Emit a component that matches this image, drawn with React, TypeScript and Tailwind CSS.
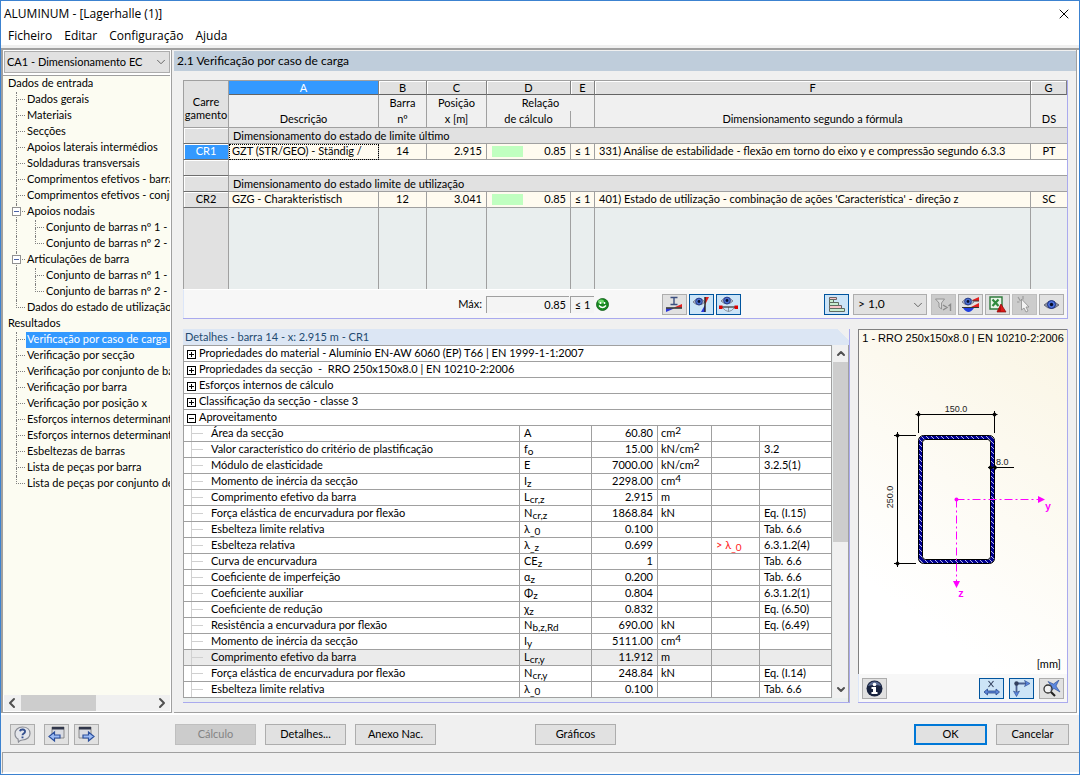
import { useState, type ReactNode } from 'react';
import { ChevronDown, ChevronLeft, ChevronRight, ChevronUp, X } from 'lucide-react';
import clsx from 'clsx';

interface TreeItem {
  label: string;
  level: 0 | 1 | 2;
  last?: boolean;
  expandable?: boolean;
}

const TREE: TreeItem[] = [
  { label: 'Dados de entrada', level: 0 },
  { label: 'Dados gerais', level: 1 },
  { label: 'Materiais', level: 1 },
  { label: 'Secções', level: 1 },
  { label: 'Apoios laterais intermédios', level: 1 },
  { label: 'Soldaduras transversais', level: 1 },
  { label: 'Comprimentos efetivos - barras', level: 1 },
  { label: 'Comprimentos efetivos - conjuntos', level: 1 },
  { label: 'Apoios nodais', level: 1, expandable: true },
  { label: 'Conjunto de barras nº 1 - ', level: 2 },
  { label: 'Conjunto de barras nº 2 - ', level: 2, last: true },
  { label: 'Articulações de barra', level: 1, expandable: true },
  { label: 'Conjunto de barras nº 1 - ', level: 2 },
  { label: 'Conjunto de barras nº 2 - ', level: 2, last: true },
  { label: 'Dados do estado de utilização', level: 1, last: true },
  { label: 'Resultados', level: 0 },
  { label: 'Verificação por caso de carga', level: 1 },
  { label: 'Verificação por secção', level: 1 },
  { label: 'Verificação por conjunto de barras', level: 1 },
  { label: 'Verificação por barra', level: 1 },
  { label: 'Verificação por posição x', level: 1 },
  { label: 'Esforços internos determinantes', level: 1 },
  { label: 'Esforços internos determinantes', level: 1 },
  { label: 'Esbeltezas de barras', level: 1 },
  { label: 'Lista de peças por barra', level: 1 },
  { label: 'Lista de peças por conjunto de barras', level: 1, last: true },
];

const GROUPS = [
  'Propriedades do material - Alumínio EN-AW 6060 (EP) T66 | EN 1999-1-1:2007',
  'Propriedades da secção  -  RRO 250x150x8.0 | EN 10210-2:2006',
  'Esforços internos de cálculo',
  'Classificação da secção - classe 3',
];

interface Detail {
  name: string;
  sym: string;
  sub?: string;
  value: string;
  unit?: string;
  exp?: string;
  check?: boolean;
  ref?: string;
  shaded?: boolean;
}

const DETAILS: Detail[] = [
  { name: 'Área da secção', sym: 'A', value: '60.80', unit: 'cm', exp: '2' },
  { name: 'Valor característico do critério de plastificação', sym: 'f', sub: 'o', value: '15.00', unit: 'kN/cm', exp: '2', ref: '3.2' },
  { name: 'Módulo de elasticidade', sym: 'E', value: '7000.00', unit: 'kN/cm', exp: '2', ref: '3.2.5(1)' },
  { name: 'Momento de inércia da secção', sym: 'I', sub: 'z', value: '2298.00', unit: 'cm', exp: '4' },
  { name: 'Comprimento efetivo da barra', sym: 'L', sub: 'cr,z', value: '2.915', unit: 'm' },
  { name: 'Força elástica de encurvadura por flexão', sym: 'N', sub: 'cr,z', value: '1868.84', unit: 'kN', ref: 'Eq. (I.15)' },
  { name: 'Esbelteza limite relativa', sym: 'λ', sub: '_0', value: '0.100', ref: 'Tab. 6.6' },
  { name: 'Esbelteza relativa', sym: 'λ', sub: '_z', value: '0.699', check: true, ref: '6.3.1.2(4)' },
  { name: 'Curva de encurvadura', sym: 'CE', sub: 'z', value: '1', ref: 'Tab. 6.6' },
  { name: 'Coeficiente de imperfeição', sym: 'α', sub: 'z', value: '0.200', ref: 'Tab. 6.6' },
  { name: 'Coeficiente auxiliar', sym: 'Φ', sub: 'z', value: '0.804', ref: '6.3.1.2(1)' },
  { name: 'Coeficiente de redução', sym: 'χ', sub: 'z', value: '0.832', ref: 'Eq. (6.50)' },
  { name: 'Resistência a encurvadura por flexão', sym: 'N', sub: 'b,z,Rd', value: '690.00', unit: 'kN', ref: 'Eq. (6.49)' },
  { name: 'Momento de inércia da secção', sym: 'I', sub: 'y', value: '5111.00', unit: 'cm', exp: '4' },
  { name: 'Comprimento efetivo da barra', sym: 'L', sub: 'cr,y', value: '11.912', unit: 'm', shaded: true },
  { name: 'Força elástica de encurvadura por flexão', sym: 'N', sub: 'cr,y', value: '248.84', unit: 'kN', ref: 'Eq. (I.14)' },
  { name: 'Esbelteza limite relativa', sym: 'λ', sub: '_0', value: '0.100', ref: 'Tab. 6.6' },
];

const RESULTS = [
  {
    group: 'Dimensionamento do estado de limite último',
    id: 'CR1',
    description: 'GZT (STR/GEO) - Ständig /',
    member: '14',
    x: '2.915',
    ratio: '0.85',
    formula: '331) Análise de estabilidade - flexão em torno do eixo y e compressão segundo 6.3.3',
    ds: 'PT',
  },
  {
    group: 'Dimensionamento do estado limite de utilização',
    id: 'CR2',
    description: 'GZG - Charakteristisch',
    member: '12',
    x: '3.041',
    ratio: '0.85',
    formula: "401) Estado de utilização - combinação de ações 'Característica' - direção z",
    ds: 'SC',
  },
];

/* ---------- icons ---------- */

const Eye = ({ x = 0, y = 0 }: { x?: number; y?: number }) => (
  <g transform={`translate(${x} ${y})`}>
    <path d="M0 5 Q6 -2 12 5 Q6 11 0 5Z" fill="#b9bfd0" stroke="#6b6f82" strokeWidth="0.8" />
    <circle cx="6" cy="4.5" r="3.4" fill="#4a6fd0" stroke="#1d2e78" strokeWidth="0.8" />
    <circle cx="6" cy="4.5" r="1.4" fill="#0a1030" />
  </g>
);

const Icon = ({ children }: { children: ReactNode }) => (
  <svg width="19" height="17" viewBox="0 0 19 17" aria-hidden="true">
    {children}
  </svg>
);

const SectionIcon = () => (
  <Icon>
    <path d="M5.500 1.500H12.500M5.500 8.500H12.500M9 1.500V8.500" stroke="#3c4f80" strokeWidth="1.4" fill="none" />
    <path d="M1 16V12.500H9Z" fill="#2b35d8" />
    <path d="M9 11.500L17 8V11.500Z" fill="#e02020" />
    <path d="M1 12H17" stroke="#222" strokeWidth="1.4" />
  </Icon>
);

const EyeDiagramIcon = () => (
  <Icon>
    <Eye x={1} y={1} />
    <path d="M13 1H17L13 9Z" fill="#e02020" />
    <path d="M13 9V16H9Z" fill="#2b35d8" />
    <path d="M13 1V16" stroke="#222" strokeWidth="1.4" />
  </Icon>
);

const EyeBeamIcon = () => (
  <Icon>
    <Eye x={2} y={0} />
    <path d="M3 11Q9.500 20 16 11M9.500 11V16" stroke="#8b93a0" fill="none" />
    <path d="M2 11H17" stroke="#333" strokeWidth="1.2" />
    <path d="M0 9.500H3.500V13H0ZM15.500 9.500H19V13H15.500Z" fill="#e00000" />
  </Icon>
);

const BarsIcon = () => (
  <Icon>
    <path d="M2.500 1.500H9.500V3.500H2.500ZM2.500 9.500H14.500V12.500H2.500Z" fill="#f8c4c8" stroke="#6e6464" />
    <path d="M2.500 3.500H6.500V6.500H2.500ZM2.500 6.500H11.500V9.500H2.500ZM2.500 12.500H17.500V15.500H2.500Z" fill="#c8ecd0" stroke="#5f6b60" />
  </Icon>
);

const FilterIcon = () => (
  <Icon>
    <path d="M1.500 3H10.500L7.500 7V13L5 11V7Z" fill="#dcdcdc" stroke="#8c8c8c" strokeWidth="0.9" />
    <path d="M9 9L13 11.500L9 14M16.500 15V8.500L14.500 10" stroke="#8a8a8a" strokeWidth="1.4" fill="none" />
  </Icon>
);

const EyeResultsIcon = () => (
  <Icon>
    <path d="M9 5L18 1V5ZM10 11L18 7V11Z" fill="#e02020" />
    <path d="M11 5H18M1 11.500H18" stroke="#333" strokeWidth="1.2" />
    <Eye x={1} y={1} />
    <path d="M2 12H13Q7.500 20 2 12Z" fill="#2040e0" />
  </Icon>
);

const ExcelIcon = () => (
  <Icon>
    <path d="M2 1H14V13H2Z" fill="#e8f4e8" stroke="#2f7a3c" strokeWidth="1.4" />
    <path d="M4.500 3.500L10.500 10M10.500 3.500L4.500 10" stroke="#2f8a3c" strokeWidth="2.2" />
    <path d="M13 8L18 16H9Z" fill="#e01818" stroke="#7c0b0b" strokeWidth="0.7" />
    <path d="M13 8V16H9Z" fill="#b01010" />
  </Icon>
);

const PickIcon = () => (
  <Icon>
    <path d="M3 1L5.500 5M8 0V3.500M2 6H4.500" stroke="#9a9a9a" strokeWidth="1.2" />
    <path d="M6.500 3L14 11H11L13 15L11 16L9 12L6.500 14Z" fill="#f2f2f2" stroke="#8c8c8c" strokeWidth="0.8" />
  </Icon>
);

const EyeIcon = () => (
  <Icon>
    <path d="M2 9Q9 2 17 9Q9 16 2 9Z" fill="#8b90a0" stroke="#55586a" strokeWidth="0.8" />
    <circle cx="9.500" cy="8.500" r="4" fill="#4a70dc" stroke="#1d2e78" />
    <circle cx="9.500" cy="8.500" r="1.700" fill="#080d28" />
  </Icon>
);

const InfoIcon = () => (
  <Icon>
    <circle cx="9.500" cy="8.500" r="8" fill="#18233f" />
    <path d="M3 6Q5 1.500 10 1.500Q15 2 16 6Q10 4 3 6Z" fill="#5a6b92" />
    <circle cx="9.500" cy="4.500" r="1.800" fill="#fff" />
    <path d="M6.500 7H11V12H12.500V14H6.500V12H8V9H6.500Z" fill="#fff" />
  </Icon>
);

const DimensionIcon = () => (
  <Icon>
    <path d="M6.500 1L11.500 7M11.500 1L6.500 7" stroke="#33405e" strokeWidth="1.1" />
    <path d="M2 12L5.500 9V11H14V9L17.500 12L14 15V13H5.500V15Z" fill="#5d85d8" stroke="#27468c" strokeWidth="0.8" />
  </Icon>
);

const AxesIcon = () => (
  <Icon>
    <path d="M4.500 3.500H14M4.500 3.500V12" stroke="#4a5f90" strokeWidth="1.800" />
    <path d="M12.500 0.500L18 3.500L12.500 6.500L14 3.500ZM1.500 11L4.500 12.500L7.500 11L4.500 16.500Z" fill="#5d88e0" stroke="#27468c" strokeWidth="0.6" />
    <circle cx="4.500" cy="3.500" r="2.200" fill="#33405e" />
  </Icon>
);

const ZoomResetIcon = () => (
  <Icon>
    <path d="M6 1.500L11.500 4L17 0L14 6L18 12L12 8.500L8 11L9.500 6Z" fill="#5d88e0" stroke="#27468c" strokeWidth="0.6" />
    <circle cx="6" cy="9" r="4" fill="#ffffff99" stroke="#333" strokeWidth="1.300" />
    <path d="M9 12L13 16" stroke="#222" strokeWidth="2.200" />
  </Icon>
);

const HelpIcon = () => (
  <Icon>
    <path d="M9.500 1C14.500 1 17 4 17 7.500C17 11 14 14 9.500 14C8 14 7 14 5.500 16L5 13C3 12 2 10 2 7.500C2 4 5 1 9.500 1Z" fill="#e4e6ec" stroke="#8a8d96" strokeWidth="1.200" />
    <path d="M7 5.200C7.500 2.700 12.500 3 12 5.800C11.700 7.500 9.500 7.500 9.500 9.300M9.500 10.500V12.300" stroke="#34508f" strokeWidth="1.900" fill="none" />
  </Icon>
);

const ArrowPageIcon = ({ forward = false }: { forward?: boolean }) => (
  <Icon>
    <path d={forward ? 'M2 1H14V12H2Z' : 'M5 1H17V12H5Z'} fill="#d9dbe2" stroke="#777" strokeWidth="0.8" />
    <path d={forward ? 'M2 1H14V3.500H2Z' : 'M5 1H17V3.500H5Z'} fill="#30364a" />
    <path
      d={forward ? 'M6 9H11.500V6L17 10.500L11.500 15V12H6Z' : 'M13 9H7.500V6L2 10.500L7.500 15V12H13Z'}
      fill="#9dbcf5"
      stroke="#2c4f9c"
      strokeWidth="1.200"
    />
  </Icon>
);

const Smiley = () => (
  <svg className="ml-[2px] h-[13px] w-[13px]" viewBox="0 0 13 13" aria-hidden="true">
    <circle cx="6.500" cy="6.500" r="6" fill="#188a20" stroke="#0d5a14" strokeWidth="0.8" />
    <ellipse cx="5" cy="3.500" rx="3" ry="2" fill="#6ed86c" />
    <path d="M4.500 4V6M8.500 4V6" stroke="#fff" strokeWidth="1.500" />
    <path d="M3 7.500Q6.500 11.500 10 7.500" stroke="#fff" strokeWidth="1.300" fill="none" />
  </svg>
);

/* ---------- small controls ---------- */

interface IconButtonProps {
  label: string;
  active?: boolean;
  disabled?: boolean;
  children: ReactNode;
}

const IconButton = ({ label, active, disabled, children }: IconButtonProps) => (
  <button
    aria-label={label}
    disabled={disabled}
    className={clsx(
      'flex h-[21px] w-[25px] shrink-0 items-center justify-center border',
      active && 'border-[#00549e] bg-[#cce4f7]',
      disabled && 'border-[#bfbfbf] bg-[#cccccc]',
      !active && !disabled && 'border-[#adadad] bg-[#e1e1e1]',
    )}
  >
    {children}
  </button>
);

const TextButton = ({ className, disabled, children }: { className: string; disabled?: boolean; children: ReactNode }) => (
  <button
    disabled={disabled}
    className={clsx(
      'flex h-[21px] shrink-0 items-center justify-center pt-px',
      disabled ? 'border border-[#bfbfbf] bg-[#cccccc] text-[#838383]' : 'bg-[#e1e1e1]',
      className,
    )}
  >
    {children}
  </button>
);

const TreeRow = ({ item, selected, onSelect }: { item: TreeItem; selected: boolean; onSelect: () => void }) => (
  <li className="flex h-4 items-stretch">
    {item.level === 0 && <span className="w-[3px] shrink-0" />}
    {item.level > 0 && <span className="w-3 shrink-0" />}
    {item.level === 2 && <span className="w-[19px] shrink-0 border-l border-dotted border-[#808080]" />}
    {item.level > 0 && (
      <span className="relative flex w-[10px] shrink-0 flex-col">
        <span className="mr-px h-2 border-b border-l border-dotted border-[#808080]" />
        {!item.last && <span className="h-2 border-l border-dotted border-[#808080]" />}
        {item.expandable && (
          <span className="absolute top-[3px] -left-1 flex h-[9px] w-[9px] items-center justify-center border border-[#919191] bg-white">
            <span className="h-px w-[5px] bg-[#4b63a7]" />
          </span>
        )}
      </span>
    )}
    <button
      onClick={onSelect}
      className={clsx('pb-[2px] pl-px text-left leading-[14px] whitespace-pre', selected && 'flex-1 bg-[#3399ff] text-white')}
    >
      {item.label}
    </button>
  </li>
);

const Sidebar = () => {
  const [selected, setSelected] = useState(16);

  return (
    <aside className="flex w-[171px] shrink-0 flex-col border-r border-b border-l-2 border-[#a0a0a0] bg-white">
      <div className="relative mt-px mr-px ml-px">
        <select
          aria-label="Caso de dimensionamento"
          className="block h-[22px] w-full appearance-none border border-[#adadad] bg-[#e1e1e1] pl-[2px] outline-none"
        >
          <option>CA1 - Dimensionamento EC</option>
        </select>
        <ChevronDown className="pointer-events-none absolute top-1 right-[2px] h-3.5 w-3.5 text-[#555]" strokeWidth={1.5} />
      </div>
      <ul className="mt-[2px] mr-px flex-1 overflow-hidden border-t border-[#a0a0a0] bg-[#fcfcf2] pl-px">
        {TREE.map((item, i) => (
          <TreeRow key={i} item={item} selected={i === selected} onSelect={() => setSelected(i)} />
        ))}
      </ul>
      <div className="mr-px mb-px ml-px flex h-4 items-center bg-[#f0f0f0]">
        <ChevronLeft className="mr-px h-4 w-4" strokeWidth={3} color="#505050" />
        <span className="h-full w-[75px] bg-[#cdcdcd]" />
        <ChevronRight className="ml-auto h-4 w-4" strokeWidth={3} color="#505050" />
      </div>
    </aside>
  );
};

const CELL = 'border-r border-b border-[#a0a0a0] bg-[#fffbf0] p-0 whitespace-nowrap overflow-hidden align-top';
const HEAD = 'border-r border-b border-[#a0a0a0] bg-[#f0f0f0] p-0 font-normal align-top';
const ROW_HEAD = 'h-4 border-x border-b border-[#a0a0a0] border-b-[#6e6e6e] p-0 font-normal align-top shadow-[inset_1px_1px_0_#fff]';
const LETTER = 'h-[14px] border-r border-b border-[#808080] border-b-[#646464] p-0 font-normal align-top';

const ResultTable = () => (
  <table className="w-full table-fixed border-separate border-spacing-0 border-t border-[#a0a0a0] text-[11px]/[13px]">
    <colgroup>
      <col className="w-[46px]" />
      <col className="w-[150px]" />
      <col className="w-[48px]" />
      <col className="w-[60px]" />
      <col className="w-[84px]" />
      <col className="w-[24px]" />
      <col />
      <col className="w-[36px]" />
    </colgroup>
    <thead>
      <tr>
        <th rowSpan={3} className="border-x border-b border-[#a0a0a0] bg-[#e1e1e1] p-0 pb-[6px] align-bottom font-normal">
          Carre
          <br />
          gamento
        </th>
        {['A', 'B', 'C', 'D', 'E', 'F', 'G'].map((c) => (
          <th
            key={c}
            className={clsx(LETTER, c === 'A' ? 'bg-[#3399ff] text-white' : 'bg-[#e1e1e1] shadow-[inset_1px_1px_0_#fff]')}
          >
            {c}
          </th>
        ))}
      </tr>
      <tr className="leading-[15px]">
        <th rowSpan={2} className={clsx(HEAD, 'pt-4')}>Descrição</th>
        <th rowSpan={2} className={clsx(HEAD, 'leading-4')}>Barra<br />nº</th>
        <th rowSpan={2} className={clsx(HEAD, 'leading-4')}>Posição<br />x [m]</th>
        <th colSpan={2} className="h-4 border-r border-[#a0a0a0] bg-[#f0f0f0] p-0 align-top font-normal">Relação</th>
        <th rowSpan={2} className={clsx(HEAD, 'pt-4')}>Dimensionamento segundo a fórmula</th>
        <th rowSpan={2} className={clsx(HEAD, 'border-r-0 pt-4')}>DS</th>
      </tr>
      <tr className="leading-[15px]">
        <th className={clsx(HEAD, 'h-[17px]')}>de cálculo</th>
        <th className={HEAD} />
      </tr>
    </thead>
    {RESULTS.map((r, i) => (
      <tbody key={r.id}>
        <tr>
          <th className={clsx(ROW_HEAD, 'bg-[#e1e1e1]')} />
          <td colSpan={7} className="border-b border-[#a0a0a0] bg-[#e1e1e1] p-0 pl-1">{r.group}</td>
        </tr>
        <tr>
          <th className={clsx(ROW_HEAD, i === 0 ? 'bg-[#3399ff] text-white' : 'bg-[#e1e1e1]')}>{r.id}</th>
          <td className={clsx(CELL, 'pl-[3px]', i === 0 && 'outline-1 -outline-offset-1 outline-dotted outline-black')}>{r.description}</td>
          <td className={clsx(CELL, 'text-center')}>{r.member}</td>
          <td className={clsx(CELL, 'pr-1 text-right')}>{r.x}</td>
          <td className={CELL}>
            <div className="flex items-start justify-between pr-1 pl-[5px]">
              <span className="mt-[2px] h-[11px] w-[31px] bg-[#c0ffc0]" />
              {r.ratio}
            </div>
          </td>
          <td className={clsx(CELL, 'text-center')}>≤ 1</td>
          <td className={clsx(CELL, 'pl-1')}>{r.formula}</td>
          <td className={clsx(CELL, 'border-r-0 text-center')}>{r.ds}</td>
        </tr>
        {i === 0 && (
          <tr>
            <th className={clsx(ROW_HEAD, 'bg-[#e1e1e1]')} />
            <td colSpan={7} className="border-b border-[#a0a0a0] bg-white p-0" />
          </tr>
        )}
      </tbody>
    ))}
    <tbody>
      <tr>
        <td className="h-[81px] border-x border-[#a0a0a0] bg-[#e1e1e1]" />
        {[0, 1, 2, 3, 4, 5].map((c) => (
          <td key={c} className="border-r border-[#a0a0a0] bg-[#e9eeee]" />
        ))}
        <td className="bg-[#e9eeee]" />
      </tr>
    </tbody>
  </table>
);

const ResultFooter = () => (
  <div className="flex h-[29px] items-center border-t border-l border-t-white border-l-[#dce6f8] bg-[#f7f7f7] pr-[3px]">
    <label htmlFor="max" className="w-[298px] text-right">Máx:</label>
    <input
      id="max"
      readOnly
      value="0.85"
      className="ml-[4px] h-[17px] w-[83px] border-t border-l border-[#a0a0a0] bg-[#f4f4f4] pr-[3px] text-right outline-none"
    />
    <span className="ml-px h-[17px] w-[24px] border-t border-l border-[#a0a0a0] bg-[#f4f4f4] text-center leading-4">≤ 1</span>
    <Smiley />
    <div className="ml-[53px] flex gap-[2px]">
      <IconButton label="Secção"><SectionIcon /></IconButton>
      <IconButton label="Diagrama" active><EyeDiagramIcon /></IconButton>
      <IconButton label="Barra" active><EyeBeamIcon /></IconButton>
    </div>
    <div className="ml-auto flex items-center gap-[2px]">
      <IconButton label="Barras de relação" active><BarsIcon /></IconButton>
      <div className="relative mx-[2px]">
        <select aria-label="Filtro" className="block h-[21px] w-[74px] appearance-none border border-[#adadad] bg-[#e1e1e1] pl-1 text-xs outline-none">
          <option>&gt; 1,0</option>
        </select>
        <ChevronDown className="pointer-events-none absolute top-1 right-[2px] h-3.5 w-3.5 text-[#555]" strokeWidth={1.5} />
      </div>
      <IconButton label="Filtrar" disabled><FilterIcon /></IconButton>
      <IconButton label="Resultados"><EyeResultsIcon /></IconButton>
      <IconButton label="Exportar"><ExcelIcon /></IconButton>
      <IconButton label="Selecionar" disabled><PickIcon /></IconButton>
      <IconButton label="Ver"><EyeIcon /></IconButton>
    </div>
  </div>
);

const D_CELL = 'h-4 border-r border-b border-[#a0a0a0] p-0 whitespace-pre align-top';

const Toggle = ({ open }: { open?: boolean }) => (
  <span className="relative mr-[3px] ml-[3px] inline-block h-[9px] w-[9px] border border-black align-[-2px]">
    <span className="absolute top-[3px] left-px h-px w-[5px] bg-black" />
    {!open && <span className="absolute top-px left-[3px] h-[5px] w-px bg-black" />}
  </span>
);

const Sub = ({ children }: { children: ReactNode }) => (
  <sub className="-bottom-[2px] text-[10px]">{children}</sub>
);

const DetailsPanel = () => (
  <section className="flex min-w-0 flex-1 flex-col border-r border-b border-[#aaaaee]">
    <h2 className="h-4 bg-[linear-gradient(225deg,#f0f0f0_8px,#dce6f4_8px)] pl-[2px] leading-4 text-[#1f4a70]">
      Detalhes - barra 14 - x: 2.915 m - CR1
    </h2>
    <div className="flex flex-1 border-r border-[#a0a0a0] bg-[#e9eeee] pb-1">
      <table className="flex-1 table-fixed border-separate border-spacing-0 border-t border-l border-[#a0a0a0] bg-white leading-[13px]">
        <colgroup>
          <col />
          <col className="w-[72px]" />
          <col className="w-[66px]" />
          <col className="w-[54px]" />
          <col className="w-[48px]" />
          <col className="w-[72px]" />
        </colgroup>
        <tbody>
          {GROUPS.map((g) => (
            <tr key={g}>
              <td colSpan={6} className={D_CELL}><Toggle />{g}</td>
            </tr>
          ))}
          <tr>
            <td colSpan={6} className={D_CELL}><Toggle open />Aproveitamento</td>
          </tr>
          {DETAILS.map((d, i) => (
            <tr key={i} className={clsx(d.shaded && 'bg-[#ebebeb]')}>
              <td className={D_CELL}>
                <div className="flex items-start">
                  <span className="ml-[7px] h-[15px] w-px bg-[#d0d0d0]" />
                  <span className="mt-[7px] mr-2 h-px w-[11px] bg-[#d0d0d0]" />
                  {d.name}
                </div>
              </td>
              <td className={clsx(D_CELL, 'pl-1')}>
                {d.sym}
                {d.sub && <Sub>{d.sub}</Sub>}
              </td>
              <td className={clsx(D_CELL, 'pr-1 text-right')}>{d.value}</td>
              <td className={clsx(D_CELL, 'pl-[3px]')}>
                {d.unit}
                {d.exp && <sup className="-top-[3px] text-[10px]">{d.exp}</sup>}
              </td>
              <td className={clsx(D_CELL, 'pl-1 text-[#ff2020]')}>
                {d.check && <>&gt; λ<Sub>_0</Sub></>}
              </td>
              <td className={clsx(D_CELL, 'pl-1')}>{d.ref}</td>
            </tr>
          ))}
        </tbody>
      </table>
      <div className="ml-px flex w-[15px] flex-col items-center bg-[#f0f0f0]">
        <ChevronUp className="h-[17px] w-3" strokeWidth={4} color="#505050" />
        <span className="h-[180px] w-full bg-[#cdcdcd]" />
        <ChevronDown className="mt-auto h-[17px] w-3" strokeWidth={4} color="#505050" />
      </div>
    </div>
  </section>
);

const SectionDrawing = () => (
  <svg className="block h-[308px] w-full" viewBox="859 347 208 308" role="img" aria-label="RRO 250x150x8.0">
    <defs>
      <pattern id="hatch" width="5" height="5" patternUnits="userSpaceOnUse">
        <rect width="5" height="5" fill="#000090" />
        <path d="M0 0L5 5M-1 4L1 6M4 -1L6 1" stroke="#c8c8f0" strokeWidth="0.9" />
      </pattern>
    </defs>
    <rect x="920.500" y="437.500" width="72" height="124" rx="4" fill="none" stroke="url(#hatch)" strokeWidth="4" />
    <rect x="918.500" y="435.500" width="76" height="128" rx="5" fill="none" stroke="#000" />
    <rect x="922.500" y="439.500" width="68" height="120" rx="3" fill="none" stroke="#000" />
    <g stroke="#000" fill="none">
      <path d="M915.500 414.500H997.500M918.500 411V433M994.500 411V433M897.500 432V567M894 435.500H916M894 563.500H916M988 467.500H1014" />
    </g>
    <path d="M918.500 412L921 414.500L918.500 417L916 414.500ZM994.500 412L997 414.500L994.500 417L992 414.500ZM897.500 433L900 435.500L897.500 438L895 435.500ZM897.500 561L900 563.500L897.500 566L895 563.500ZM990.500 465L993 467.500L990.500 470L988 467.500ZM995 465L997.500 467.500L995 470L992.500 467.500Z" />
    <g stroke="#ff00ff" fill="none" strokeDasharray="8 3 2 3">
      <path d="M956.500 499.500H1038M956.500 499.500V582" />
    </g>
    <path d="M1038 496L1045 499.500L1038 503ZM953 581H960L956.500 588Z" fill="#ff00ff" />
    <circle cx="956.500" cy="499.500" r="2" fill="#ff00ff" />
    <g fontFamily="Liberation Sans, sans-serif" fontSize="9" fill="#222">
      <text x="956" y="412" textAnchor="middle">150.0</text>
      <text x="996" y="465">8.0</text>
      <text transform="translate(893 497) rotate(-90)" textAnchor="middle">250.0</text>
    </g>
    <g fontFamily="Liberation Mono, monospace" fontSize="10" fontWeight="bold" fill="#ff00ff">
      <text x="1045" y="510">y</text>
      <text x="958" y="597">z</text>
    </g>
  </svg>
);

const PreviewPanel = () => (
  <section className="flex w-[210px] shrink-0 flex-col border-r border-b border-[#aaaaee]">
    <div className="flex flex-1 flex-col border-t border-l border-[#808080] bg-[linear-gradient(35deg,#ffffff_20%,#faf5e4)]">
      <h2 className="h-[17px] text-center font-['Liberation_Sans',sans-serif] leading-[17px] whitespace-nowrap">
        1 - RRO 250x150x8.0 | EN 10210-2:2006
      </h2>
      <SectionDrawing />
      <p className="mt-auto pr-[6px] pb-[2px] text-right leading-4">[mm]</p>
    </div>
    <div className="flex h-7 items-center gap-[5px] border-l border-[#dce6f8] bg-[#f7f7f7] px-[3px]">
      <IconButton label="Informação"><InfoIcon /></IconButton>
      <span className="flex-1" />
      <IconButton label="Cotas" active><DimensionIcon /></IconButton>
      <IconButton label="Eixos" active><AxesIcon /></IconButton>
      <IconButton label="Ver tudo"><ZoomResetIcon /></IconButton>
    </div>
  </section>
);

export default function App() {
  return (
    <div className="flex min-h-screen flex-col border border-[#3c82d0] bg-[#f0f0f0] font-['Lato','Liberation_Sans',sans-serif] text-[11px] text-black">
      <header className="bg-white font-['Open_Sans','Noto_Sans',sans-serif] text-xs">
        <div className="flex h-[25px] items-center justify-between pr-[7px] pl-[3px]">
          <h1>ALUMINUM - [Lagerhalle (1)]</h1>
          <button aria-label="Fechar">
            <X className="h-4 w-4" strokeWidth={1.5} />
          </button>
        </div>
        <nav className="flex h-[19px] items-center gap-[12px] pl-[7px]">
          {['Ficheiro', 'Editar', 'Configuração', 'Ajuda'].map((m) => (
            <button key={m}>{m}</button>
          ))}
        </nav>
      </header>

      <div className="mt-[3px] flex flex-1 border-t-2 border-[#a0a0a0]">
        <Sidebar />
        <main className="ml-[2px] flex min-w-0 flex-1 flex-col border-r border-b border-[#a0a0a0]">
          <h2 className="mt-px h-5 bg-[#bfcddb] pl-[3px] text-xs/5">2.1 Verificação por caso de carga</h2>
          <div className="flex flex-1 flex-col pt-[9px] pr-[8px] pb-[9px] pl-[9px]">
            <div className="border-r border-b border-[#aaaaee]">
              <ResultTable />
              <ResultFooter />
            </div>
            <div className="mt-[10px] flex flex-1 gap-[8px]">
              <DetailsPanel />
              <PreviewPanel />
            </div>
          </div>
        </main>
        <span className="w-[2px] bg-white" />
      </div>

      <div className="flex h-[39px] items-center gap-[9px] border-t-2 border-white pt-px pr-[10px] pl-[9px]">
        <IconButton label="Ajuda"><HelpIcon /></IconButton>
        <div className="flex gap-[5px]">
          <IconButton label="Anterior"><ArrowPageIcon /></IconButton>
          <IconButton label="Seguinte"><ArrowPageIcon forward /></IconButton>
        </div>
        <TextButton disabled className="ml-[67px] w-[81px]">Cálculo</TextButton>
        <TextButton className="w-[81px] border border-[#adadad]">Detalhes...</TextButton>
        <TextButton className="w-[81px] border border-[#adadad]">Anexo Nac.</TextButton>
        <TextButton className="ml-[90px] w-[81px] border border-[#adadad]">Gráficos</TextButton>
        <span className="flex-1" />
        <TextButton className="w-[73px] border-2 border-[#0078d7]">OK</TextButton>
        <TextButton className="w-[73px] border border-[#adadad]">Cancelar</TextButton>
      </div>
      <footer className="ml-px h-[22px] border-t border-b-2 border-l border-t-[#a0a0a0] border-b-white border-l-[#a0a0a0]" />
    </div>
  );
}
